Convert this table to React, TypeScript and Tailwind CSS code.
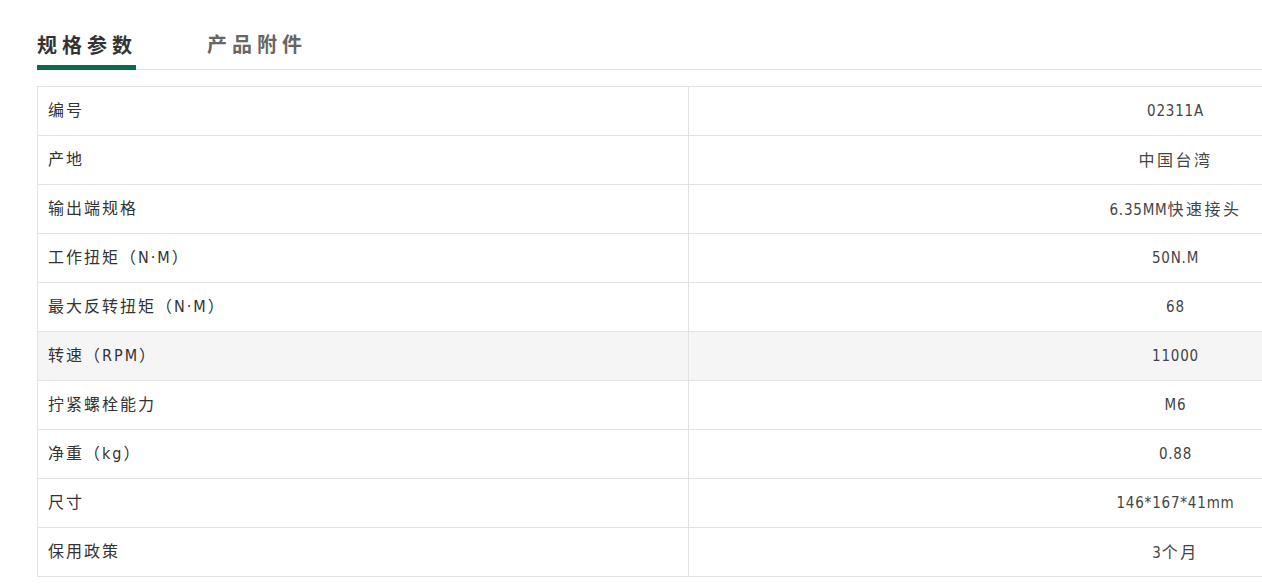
import React from 'react';

const specs: { label: string; value: string; hover?: boolean }[] = [
  { label: '编号', value: '02311A' },
  { label: '产地', value: '中国台湾' },
  { label: '输出端规格', value: '6.35MM快速接头' },
  { label: '工作扭矩（N·M）', value: '50N.M' },
  { label: '最大反转扭矩（N·M）', value: '68' },
  { label: '转速（RPM）', value: '11000', hover: true },
  { label: '拧紧螺栓能力', value: 'M6' },
  { label: '净重（kg）', value: '0.88' },
  { label: '尺寸', value: '146*167*41mm' },
  { label: '保用政策', value: '3个月' },
];

// split value into latin / CJK runs so the digits can use the narrow face
function Value({ text }: { text: string }) {
  const runs = text.match(/[\u4e00-\u9fff]+|[^\u4e00-\u9fff]+/g) || [];
  return (
    <span className="whitespace-nowrap">
      {runs.map((r, i) =>
        /[\u4e00-\u9fff]/.test(r) ? (
          <span key={i} className="text-[16px] tracking-[2.5px]" style={{ fontFamily: '"Noto Sans CJK SC", sans-serif' }}>
            {r}
          </span>
        ) : (
          <span key={i} className="text-[15px] tracking-[0.8px]" style={{ fontFamily: '"DejaVu Sans Condensed", sans-serif' }}>
            {r}
          </span>
        )
      )}
    </span>
  );
}

export default function App() {
  return (
    <div
      className="w-[1262px] h-[585px] overflow-hidden bg-white text-[#333]"
      style={{ fontFamily: '"DejaVu Sans Condensed", "Noto Sans CJK SC", sans-serif' }}
    >
      {/* Tabs */}
      <div className="pl-[37px] pt-[30px]">
        <div className="flex items-end border-b border-[#e0e0e0]">
          <div className="w-[99px] h-[39px] border-b-[5px] border-[#0b6b48] -mb-px">
            <span className="block whitespace-nowrap text-[20px] font-bold tracking-[5px] leading-[28px] text-[#333]" style={{ fontFamily: '"Noto Sans CJK SC", sans-serif' }}>
              规格参数
            </span>
          </div>
          <div className="ml-[71px] h-[39px]">
            <span className="block whitespace-nowrap text-[20px] font-bold tracking-[5px] leading-[28px] text-[#666]" style={{ fontFamily: '"Noto Sans CJK SC", sans-serif' }}>
              产品附件
            </span>
          </div>
        </div>
      </div>

      {/* Spec table */}
      <div className="pl-[37px] pt-[16px]">
        <div className="w-[1625px] border-t border-l border-[#e2e2e2]">
          {specs.map((s) => (
            <div
              key={s.label}
              className={`flex h-[49px] border-b border-[#e2e2e2] ${s.hover ? 'bg-[#f5f5f5]' : 'bg-white'}`}
            >
              <div className="w-[651px] shrink-0 flex items-center pl-[10px] border-r border-[#e2e2e2] text-[16px] tracking-[2px] text-[#333]">
                {s.label}
              </div>
              <div className="flex-1 flex items-center justify-center text-[#444]">
                <Value text={s.value} />
              </div>
            </div>
          ))}
        </div>
      </div>
    </div>
  );
}
